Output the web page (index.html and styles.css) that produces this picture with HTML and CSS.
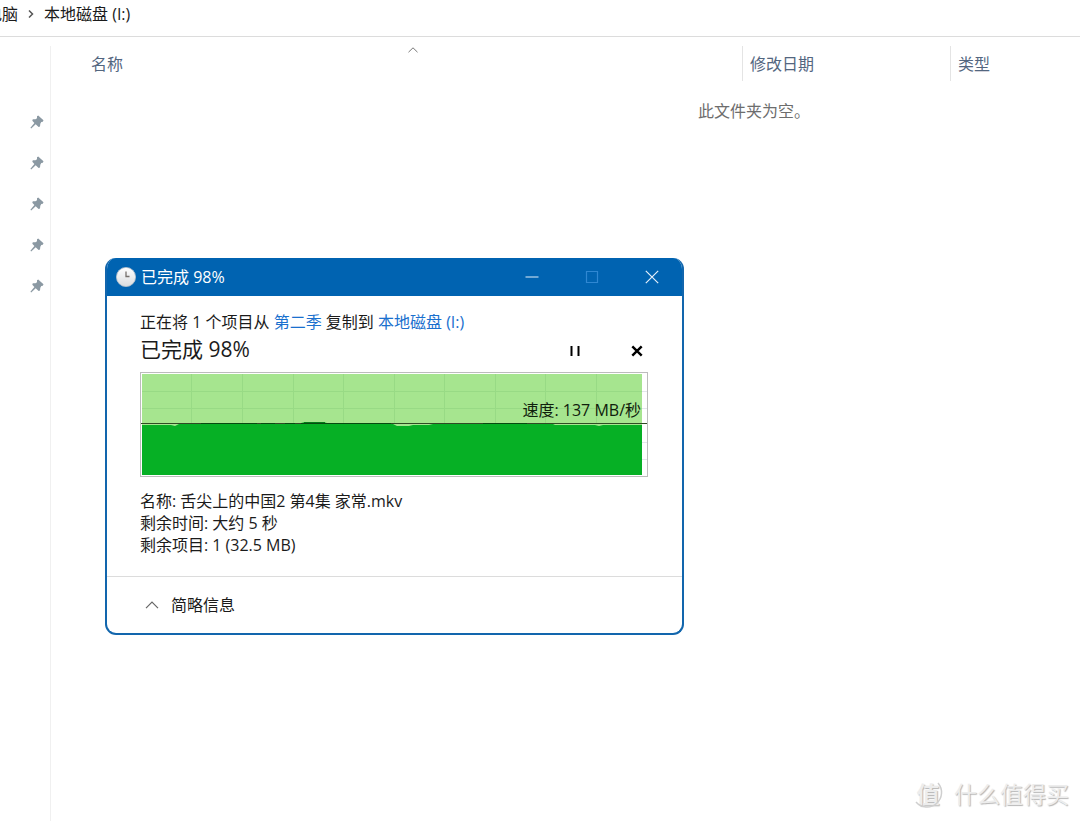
FILE: index.html
```html
<!DOCTYPE html>
<html lang="zh-CN">
<head>
<meta charset="utf-8">
<meta name="viewport" content="width=device-width, initial-scale=1">
<title>本地磁盘 (I:)</title>
<link rel="stylesheet" href="styles.css">
</head>
<body>
<svg class="defs" aria-hidden="true">
  <symbol id="pin" viewBox="0 0 14 14"><path d="M8.200 .5 13.500 5.200 12.800 6.800 11.300 7 10.300 8.800 10 11.600 8.600 12 5.700 9.300 1.200 13.500 .4 12.800 4.400 8 2.300 5.700 2.800 4.300 5.500 4.200 7 3.200 7 1.300Z"/></symbol>
</svg>
<div class="explorer">
  <nav class="path-bar" aria-label="路径">
    <a class="crumb" href="#">电脑</a>
    <svg class="crumb-arrow" viewBox="0 0 6 8"><path d="M1 .5 4.500 4 1 7.500"/></svg>
    <a class="crumb" href="#">本地磁盘 (I:)</a>
  </nav>
  <div class="panes">
    <aside class="sidebar">
      <svg class="pin"><use href="#pin"/></svg>
      <svg class="pin"><use href="#pin"/></svg>
      <svg class="pin"><use href="#pin"/></svg>
      <svg class="pin"><use href="#pin"/></svg>
      <svg class="pin"><use href="#pin"/></svg>
    </aside>
    <main class="files">
      <div class="columns">
        <button class="column column-name" type="button">名称
          <svg class="sort" viewBox="0 0 10 6"><path d="M.5 5.200 5 .8 9.500 5.200"/></svg>
        </button>
        <button class="column" type="button">修改日期</button>
        <button class="column" type="button">类型</button>
      </div>
      <p class="empty">此文件夹为空。</p>
    </main>
  </div>
</div>

<section class="dialog" role="dialog" aria-labelledby="dialog-title">
  <header class="title-bar">
    <svg class="clock" viewBox="0 0 20 20">
      <defs><linearGradient id="face" x2="0" y2="1"><stop offset="0" stop-color="#fff"/><stop offset="1" stop-color="#d9dcdf"/></linearGradient></defs>
      <circle cx="10" cy="10" r="9.600" fill="url(#face)" stroke="#b9c2cb" stroke-width=".8"/>
      <path d="M10 4.500V9.500H13.500" fill="none" stroke="#77716d" stroke-width="1.300"/>
    </svg>
    <h1 class="title" id="dialog-title">已完成 98%</h1>
    <button class="window-button" type="button" aria-label="最小化"><svg viewBox="0 0 14 14"><path d="M.5 7H13.500"/></svg></button>
    <button class="window-button" type="button" aria-label="最大化" disabled><svg viewBox="0 0 14 14"><path d="M1.500 1.500H12.500V12.500H1.500Z"/></svg></button>
    <button class="window-button" type="button" aria-label="关闭"><svg viewBox="0 0 14 14"><path d="M.8.8 13.200 13.200M13.200.8.8 13.200"/></svg></button>
  </header>
  <div class="dialog-body">
    <p class="summary">正在将 1 个项目从 <a href="#">第二季</a> 复制到 <a href="#">本地磁盘 (I:)</a></p>
    <div class="progress-row">
      <h2 class="progress-title">已完成 98%</h2>
      <button class="action" type="button" aria-label="暂停"><svg viewBox="0 0 12 12"><path d="M2.500 1V11M9.500 1V11"/></svg></button>
      <button class="action" type="button" aria-label="取消"><svg viewBox="0 0 12 12"><path class="cross" d="M1.300 1.300 10.700 10.700M10.700 1.300 1.300 10.700"/></svg></button>
    </div>
    <div class="chart">
      <svg class="chart-plot" viewBox="0 0 506 103" preserveAspectRatio="none">
        <rect width="506" height="103" fill="#fff"/>
        <path d="M501 18.500H506M501 35.500H506M501 69.500H506M501 86.500H506" stroke="#e4e7ec" fill="none"/>
        <rect x="1" y="1" width="500" height="101" fill="#a6e58f"/>
        <path d="M50.500 1V50M101.500 1V50M152.500 1V50M202.500 1V50M253.500 1V50M303.500 1V50M354.500 1V50M404.500 1V50M455.500 1V50M1 18.500H501M1 35.500H501" stroke="#98da85" fill="none"/>
        <path d="M1 52H30L34 53 38 51H60L62 50H160L164 49H182L186 50H250L256 53H268L272 52H288L292 51H340L342 50H386L390 51H412L414 52H454L458 53 462 52H501V102H1Z" fill="#06b025"/>
        <path d="M0 50.500H506" stroke="#2f4a24" fill="none"/>
        <path d="M60 50.500H116M120 50.500H134M144 50.500H154M160 50.500H250M342 50.500H386" stroke="#064a10" fill="none"/>
        <path d="M163 49.500H184" stroke="#06781a" fill="none"/>
      </svg>
      <span class="speed">速度: 137 MB/秒</span>
    </div>
    <dl class="details">
      <div class="detail"><dt>名称:</dt><dd>舌尖上的中国2 第4集 家常.mkv</dd></div>
      <div class="detail"><dt>剩余时间:</dt><dd>大约 5 秒</dd></div>
      <div class="detail"><dt>剩余项目:</dt><dd>1 (32.5 MB)</dd></div>
    </dl>
  </div>
  <footer class="dialog-footer">
    <button class="toggle" type="button"><svg viewBox="0 0 14 8"><path d="M1 7.200 7 1.200 13 7.200"/></svg>简略信息</button>
  </footer>
</section>

<div class="watermark">
  <span class="watermark-badge">值<svg class="watermark-ring" viewBox="0 0 30 30"><path d="M25 4A14 14 0 1 1 3 23"/></svg></span>
  <span>什么值得买</span>
</div>
</body>
</html>
```
FILE: styles.css
```css
* { box-sizing: border-box; }
body {
  margin: 0;
  min-height: 100vh;
  background: #fff;
  color: #1b1b1b;
  font: 16px/22px "Open Sans", "Noto Sans CJK SC", sans-serif;
  overflow: hidden;
}
h1, h2, p, dl, dd { margin: 0; font-weight: 400; }
button {
  padding: 0;
  border: 0;
  background: none;
  color: inherit;
  font: inherit;
}
a { color: inherit; text-decoration: none; }
svg { display: block; flex: none; }
.defs { position: absolute; width: 0; height: 0; }

.explorer { display: flex; flex-direction: column; min-height: 100vh; }
.path-bar {
  display: flex;
  align-items: center;
  gap: 10px;
  height: 37px;
  margin-left: -14px;
  padding-bottom: 8px;
  border-bottom: 1px solid #dcdcdc;
  white-space: nowrap;
}
.crumb-arrow { width: 6px; height: 8px; fill: none; stroke: #555; stroke-width: 1.5; }
.panes { display: flex; flex: 1; padding-top: 9px; }
.sidebar {
  display: flex;
  flex-direction: column;
  align-items: flex-end;
  gap: 27px;
  width: 51px;
  padding: 69px 6px 0 0;
  border-right: 1px solid #f0f0f0;
}
.pin { width: 14px; height: 14px; fill: #8b99a3; }
.files { flex: 1; min-width: 0; }
.columns { display: grid; grid-template-columns: 1fr 208px 130px; height: 35px; }
.column {
  padding: 0 7px;
  border-left: 1px solid #e4e4e4;
  color: #53667f;
  text-align: left;
}
.column-name { position: relative; padding-left: 40px; border-left: 0; }
.sort {
  position: absolute;
  top: 1px;
  left: 357px;
  width: 10px;
  height: 6px;
  fill: none;
  stroke: #777;
}
.empty { padding: 19px 0 0 647px; color: #6d6d6d; white-space: nowrap; }

.dialog {
  position: absolute;
  top: 258px;
  left: 105px;
  width: 579px;
  overflow: hidden;
  border: 2px solid #1266ad;
  border-top: 0;
  border-radius: 11px;
  background: #fff;
}
.title-bar {
  display: flex;
  align-items: center;
  height: 38px;
  padding-left: 9px;
  background: #0063b1;
  color: #fff;
}
.clock { width: 20px; height: 20px; }
.title { flex: 1; padding-left: 5px; font-size: 16px; }
.window-button { display: flex; justify-content: center; width: 60px; }
.window-button svg { width: 14px; height: 14px; fill: none; stroke: #e3effa; stroke-width: 1.2; }
.window-button:disabled svg { stroke: #2f87d2; }
.dialog-body { padding: 15px 34px 20px 33px; }
.summary { white-space: nowrap; }
.summary a { color: #1a70ce; }
.progress-row { display: flex; align-items: center; height: 32px; }
.progress-title { flex: 1; font-size: 21px; line-height: 32px; }
.action { display: flex; width: 62px; }
.action + .action { width: 17px; }
.action svg { width: 12px; height: 12px; margin-top: 4px; fill: none; stroke: #000; stroke-width: 2; }
.action .cross { stroke-width: 2.4; }
.chart {
  position: relative;
  height: 105px;
  margin-top: 7px;
  border: 1px solid #bcbcbc;
}
.chart-plot { width: 100%; height: 100%; }
.speed { position: absolute; right: 6px; top: 26px; color: #10200c; }
.details { padding-top: 13px; }
.detail { display: flex; gap: 4px; }
.dialog-footer { padding: 17px 38px; border-top: 1px solid #dcdcdc; }
.toggle { display: flex; align-items: center; gap: 12px; }
.toggle svg { width: 14px; height: 8px; fill: none; stroke: #666; stroke-width: 1.2; }

.watermark {
  position: absolute;
  right: 11px;
  bottom: 11px;
  display: flex;
  align-items: center;
  gap: 10px;
  color: #ededed;
  font-size: 23px;
  line-height: 32px;
  text-shadow: 1px 1px 1px #b5b5b5;
}
.watermark-badge { position: relative; width: 32px; text-align: center; font-weight: 700; }
.watermark-ring { position: absolute; top: 1px; left: 1px; width: 30px; height: 30px; fill: none; stroke: #cfcfcf; stroke-width: 1.5; }
```
